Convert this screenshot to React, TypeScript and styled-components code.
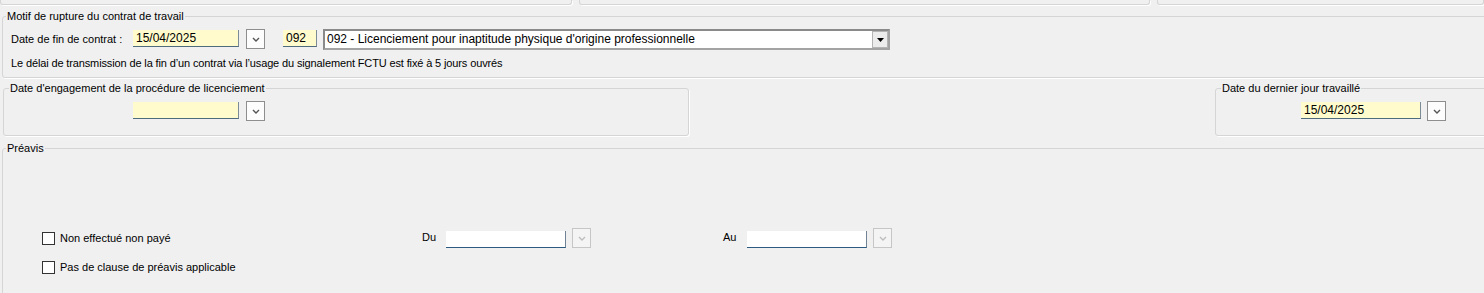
import React from 'react';
import styled, { createGlobalStyle } from 'styled-components';

const GlobalStyle = createGlobalStyle`
    html, body {
        margin: 0;
        padding: 0;
        background: #f0f0f0;
    }
    body {
        width: 1484px;
        height: 293px;
        overflow: hidden;
        font-family: "Liberation Sans", Arial, sans-serif;
        font-size: 11px;
        color: #000;
    }
    * {
        box-sizing: border-box;
    }
`;

const Page = styled.div`
    display: flex;
    flex-direction: column;
    width: 1484px;
`;

const TopStrip = styled.div`
    display: flex;
    gap: 7px;
    height: 6px;
`;

const StubPanel = styled.div<{ $w?: number }>`
    flex: ${(p) => (p.$w ? `0 0 ${p.$w}px` : '1 1 auto')};
    height: 5px;
    border: 1px solid #d5d5d5;
    border-top: none;
    border-radius: 0 0 3px 3px;
    box-shadow: 1px 1px 0 #fff;
`;

const Group = styled.fieldset<{ $ml?: number; $mt?: number }>`
    margin: ${(p) => p.$mt ?? 0}px 0 0 ${(p) => p.$ml ?? 0}px;
    padding: 0;
    min-width: 0;
    border: 1px solid #d5d5d5;
    border-radius: 3px;
    box-shadow: 1px 1px 0 #fff;
`;

const Legend = styled.legend<{ $indent?: number }>`
    margin-left: ${(p) => p.$indent ?? 3}px;
    padding: 0 1px;
    font-size: 11px;
    line-height: 13px;
    background: #f0f0f0;
`;

const Row = styled.div<{ $mt?: number; $ml?: number; $mb?: number }>`
    display: flex;
    align-items: flex-start;
    margin: ${(p) => p.$mt ?? 0}px 0 ${(p) => p.$mb ?? 0}px ${(p) => p.$ml ?? 0}px;
`;

const Label = styled.span<{ $w?: number }>`
    width: ${(p) => (p.$w ? `${p.$w}px` : 'auto')};
    flex-shrink: 0;
    font-size: 11px;
    line-height: 21px;
    white-space: nowrap;
`;

const Field = styled.div<{ $w: number; $ml?: number; $white?: boolean }>`
    width: ${(p) => p.$w}px;
    height: 17px;
    margin-left: ${(p) => p.$ml ?? 0}px;
    margin-top: 1px;
    padding-left: 3px;
    background: ${(p) => (p.$white ? '#fff' : '#fffbcc')};
    border-bottom: 1px solid ${(p) => (p.$white ? '#2c5a80' : '#4f6b7e')};
    border-right: 1px solid ${(p) => (p.$white ? '#6f8396' : '#7c8c96')};
    font-size: 12px;
    line-height: 16px;
    white-space: nowrap;
`;

const PickerButton = styled.div<{ $ml?: number; $disabled?: boolean }>`
    display: flex;
    align-items: center;
    justify-content: center;
    width: 19px;
    height: 20px;
    margin-left: ${(p) => p.$ml ?? 7}px;
    background: ${(p) => (p.$disabled ? '#f4f4f4' : '#fdfdfd')};
    border: 1px solid ${(p) => (p.$disabled ? '#c6c6c6' : '#8e8e8e')};
    color: ${(p) => (p.$disabled ? '#bdbdbd' : '#555')};
`;

const Combo = styled.div`
    display: flex;
    align-items: center;
    width: 567px;
    height: 21px;
    margin-left: 6px;
    background: #fff;
    border: 2px solid #a3a3a3;
    border-top-color: #8a8a8a;
    border-left-color: #8a8a8a;
`;

const ComboText = styled.span`
    flex: 1;
    padding-left: 2px;
    font-size: 12px;
    line-height: 17px;
    white-space: nowrap;
`;

const ComboArrow = styled.div`
    display: flex;
    align-items: center;
    justify-content: center;
    width: 16px;
    height: 17px;
    background: #ececec;
    border: 1px solid #b4b4b4;
`;

const Info = styled.div`
    margin: 7px 0 0 8px;
    padding-bottom: 7px;
    font-size: 11px;
    line-height: 13px;
    letter-spacing: -0.13px;
`;

const SplitRow = styled.div`
    display: flex;
    margin-top: 4px;
`;

const PreavisGrid = styled.div`
    display: grid;
    grid-template-columns: 380px 301px auto;
    grid-auto-rows: 21px;
    align-content: start;
    row-gap: 8px;
    margin: 72px 0 0 39px;
    height: 160px;
`;

const Cell = styled.div`
    display: flex;
    align-items: flex-end;
    height: 21px;
`;

const CheckCell = styled.label`
    display: flex;
    align-items: center;
    height: 21px;
    font-size: 11px;
`;

const Box = styled.span`
    width: 13px;
    height: 13px;
    margin: 2px 5px 0 0;
    background: #fff;
    border: 1px solid #333;
`;

const Chevron = () => (
    <svg width="8" height="5" viewBox="0 0 8 5">
        <path d="M1 1 L4 4 L7 1" fill="none" stroke="currentColor" strokeWidth="1.4" />
    </svg>
);

const Triangle = () => (
    <svg width="7" height="4" viewBox="0 0 7 4">
        <path d="M0 0 H7 L3.5 4 Z" fill="#000" />
    </svg>
);

const DateInput: React.FC<{ w: number; ml?: number; value?: string; white?: boolean; disabled?: boolean; gap?: number }> = ({
    w,
    ml,
    value,
    white,
    disabled,
    gap = 7,
}) => (
    <>
        <Field $w={w} $ml={ml} $white={white}>
            {value}
        </Field>
        <PickerButton $ml={gap} $disabled={disabled}>
            <Chevron />
        </PickerButton>
    </>
);

export default function App() {
    return (
        <Page>
            <GlobalStyle />
            <TopStrip>
                <StubPanel $w={572} />
                <StubPanel $w={571} />
                <StubPanel />
            </TopStrip>

            <Group $ml={2} $mt={4} style={{ marginRight: -6 }}>
                <Legend>Motif de rupture du contrat de travail</Legend>
                <Row $mt={6} $ml={8}>
                    <Label $w={122}>Date de fin de contrat :</Label>
                    <DateInput w={106} value="15/04/2025" />
                    <Field $w={34} $ml={18}>
                        092
                    </Field>
                    <Combo>
                        <ComboText>092 - Licenciement pour inaptitude physique d'origine professionnelle</ComboText>
                        <ComboArrow>
                            <Triangle />
                        </ComboArrow>
                    </Combo>
                </Row>
                <Info>
                    Le délai de transmission de la fin d’un contrat via l’usage du signalement FCTU est fixé à 5 jours ouvrés
                </Info>
            </Group>

            <SplitRow>
                <Group $ml={3} style={{ width: 686 }}>
                    <Legend $indent={5}>Date d'engagement de la procédure de licenciement</Legend>
                    <Row $mt={6} $ml={129} $mb={14}>
                        <DateInput w={106} />
                    </Row>
                </Group>
                <Group $ml={526} style={{ flex: 1, marginRight: -6 }}>
                    <Legend $indent={5}>Date du dernier jour travaillé</Legend>
                    <Row $mt={6} $ml={85} $mb={14}>
                        <DateInput w={120} value="15/04/2025" gap={6} />
                    </Row>
                </Group>
            </SplitRow>

            <Group $ml={2} $mt={6} style={{ marginRight: -6 }}>
                <Legend>Préavis</Legend>
                <PreavisGrid>
                    <CheckCell>
                        <Box />
                        Non effectué non payé
                    </CheckCell>
                    <Cell>
                        <Label $w={24}>Du</Label>
                        <DateInput w={120} white disabled gap={6} />
                    </Cell>
                    <Cell>
                        <Label $w={24}>Au</Label>
                        <DateInput w={120} white disabled gap={6} />
                    </Cell>
                    <CheckCell>
                        <Box />
                        Pas de clause de préavis applicable
                    </CheckCell>
                </PreavisGrid>
            </Group>
        </Page>
    );
}
